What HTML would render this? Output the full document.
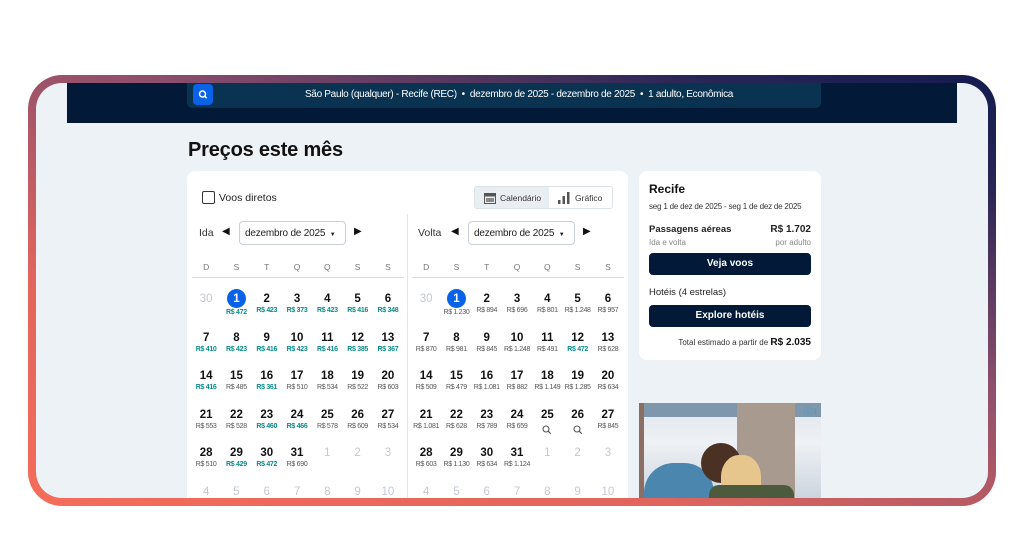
<!DOCTYPE html>
<html><head><meta charset="utf-8"><style>
*{box-sizing:border-box;margin:0;padding:0}
body{width:1024px;height:536px;background:#fff;position:relative;overflow:hidden;font-family:"Liberation Sans",sans-serif;color:#111}
.frame{position:absolute;left:28px;top:75px;width:968px;height:431px;border-radius:34px;background:linear-gradient(20deg,#f56c5a 0%,#e0655d 30%,#8e4f6c 60%,#2a2656 85%,#141b4f 100%)}
.inner{position:absolute;left:8px;top:8px;right:8px;bottom:8px;border-radius:26px;background:#edf2f7;overflow:hidden}
.hdr{position:absolute;left:31px;top:0;width:890px;height:40px;background:#021a37}
.sbar{position:absolute;left:151px;top:0;width:634px;height:25px;background:#0a3352;border-radius:0 0 5px 5px}
.sbtn{position:absolute;left:6px;top:1px;width:20px;height:21px;background:#0a62e8;border-radius:4px}
.stxt{position:absolute;left:0;right:0;top:6px;text-align:center;color:#fff;font-size:10px;letter-spacing:-.3px;padding-left:30px}
h1{position:absolute;left:152px;top:56px;font-size:20px;font-weight:bold;color:#111;letter-spacing:-.2px}
.card{position:absolute;background:#fff;border-radius:8px}
.cb{position:absolute;left:15px;top:20px;width:13px;height:13px;border:1.5px solid #333;border-radius:2px}
.t{position:absolute;white-space:nowrap}
.tog{position:absolute;left:287px;top:15px;width:139px;height:23px;border:1px solid #dde3ea;border-radius:3px;overflow:hidden;font-size:8.5px;color:#333}
.dd{position:absolute;width:107px;height:24px;border:1px solid #c9d0d8;border-radius:4px;font-size:10px;padding:6px 0 0 5px;color:#222;white-space:nowrap;letter-spacing:-.2px}
.grid{position:absolute;display:grid;grid-template-columns:repeat(7,30.3px);grid-auto-rows:38.6px}
.c{text-align:center}
.c b{display:block;font-size:11.5px;line-height:14px;padding-top:3px;color:#111}
.c i{display:block;font-style:normal;font-size:7px;color:#555;line-height:10px;letter-spacing:-.3px;white-space:nowrap}
.c i.g{color:#0b8a8a;font-weight:bold}
.c.x b{color:#c4c9cf;font-weight:normal}
.c.s b{display:inline-block;width:19px;height:19px;border-radius:50%;background:#0a62e8;color:#fff;padding-top:3px;margin-top:0}
.wk{position:absolute;display:grid;grid-template-columns:repeat(7,30.3px);font-size:8.5px;color:#777;text-align:center}
.btn{position:absolute;left:10px;width:162px;height:22px;background:#021a37;border-radius:4px;color:#fff;font-size:10px;font-weight:bold;text-align:center;padding-top:5px}
</style></head><body>
<div class="frame"><div class="inner">
<div class="hdr"></div>
<div class="sbar"><div class="sbtn"><svg width="20" height="21" viewBox="0 0 20 21"><circle cx="9.5" cy="10" r="3" fill="none" stroke="#fff" stroke-width="1.5"/><path d="M11.7 12.2l2 2" stroke="#fff" stroke-width="1.5"/></svg></div>
<div class="stxt">São Paulo (qualquer) - Recife (REC) &nbsp;•&nbsp; dezembro de 2025 - dezembro de 2025 &nbsp;•&nbsp; 1 adulto, Econômica</div></div>
<h1>Preços este mês</h1>

<div class="card" style="left:151px;top:88px;width:441px;height:340px">
<div class="cb"></div><div class="t" style="left:32px;top:21px;font-size:10.5px;color:#222">Voos diretos</div>
<div class="tog"><div style="position:absolute;left:0;top:0;width:74px;height:23px;background:#e9eef3"></div>
<svg style="position:absolute;left:9px;top:6px" width="12" height="11"><rect x="0.5" y="0.5" width="11" height="10" fill="none" stroke="#555"/><rect x="0.5" y="0.5" width="11" height="3" fill="#555"/><rect x="2" y="5" width="8" height="4" fill="#888"/></svg>
<div class="t" style="left:25px;top:6px">Calendário</div>
<svg style="position:absolute;left:83px;top:5px" width="12" height="12"><rect x="0" y="8" width="2.5" height="4" fill="#555"/><rect x="4.5" y="4" width="2.5" height="8" fill="#555"/><rect x="9" y="0" width="2.5" height="12" fill="#555"/></svg>
<div class="t" style="left:100px;top:6px">Gráfico</div></div>
<div style="position:absolute;left:220px;top:43px;width:1px;height:300px;background:#e3e7ec"></div>
<div class="t" style="left:12px;top:56px;font-size:10.5px;color:#333">Ida</div>
<div class="t" style="left:35px;top:55px;font-size:10px">◀</div>
<div class="dd" style="left:52px;top:50px">dezembro de 2025 <span style="font-size:6px;margin-left:2px">▼</span></div>
<div class="t" style="left:167px;top:55px;font-size:10px">▶</div>
<div class="t" style="left:231px;top:56px;font-size:10.5px;color:#333">Volta</div>
<div class="t" style="left:264px;top:55px;font-size:10px">◀</div>
<div class="dd" style="left:281px;top:50px">dezembro de 2025 <span style="font-size:6px;margin-left:2px">▼</span></div>
<div class="t" style="left:396px;top:55px;font-size:10px">▶</div>
<div class="wk" style="left:4px;top:91px"><span>D</span><span>S</span><span>T</span><span>Q</span><span>Q</span><span>S</span><span>S</span></div>
<div class="wk" style="left:224px;top:91px"><span>D</span><span>S</span><span>T</span><span>Q</span><span>Q</span><span>S</span><span>S</span></div>
<div style="position:absolute;left:5px;top:106px;width:212px;height:1px;background:#d8dde3"></div>
<div style="position:absolute;left:225px;top:106px;width:212px;height:1px;background:#d8dde3"></div>

<div class="grid" style="left:4px;top:118px">
<div class="c x"><b>30</b></div><div class="c s"><b>1</b><i class="g">R$ 472</i></div><div class="c"><b>2</b><i class="g">R$ 423</i></div><div class="c"><b>3</b><i class="g">R$ 373</i></div><div class="c"><b>4</b><i class="g">R$ 423</i></div><div class="c"><b>5</b><i class="g">R$ 416</i></div><div class="c"><b>6</b><i class="g">R$ 348</i></div>
<div class="c"><b>7</b><i class="g">R$ 410</i></div><div class="c"><b>8</b><i class="g">R$ 423</i></div><div class="c"><b>9</b><i class="g">R$ 416</i></div><div class="c"><b>10</b><i class="g">R$ 423</i></div><div class="c"><b>11</b><i class="g">R$ 416</i></div><div class="c"><b>12</b><i class="g">R$ 385</i></div><div class="c"><b>13</b><i class="g">R$ 367</i></div>
<div class="c"><b>14</b><i class="g">R$ 416</i></div><div class="c"><b>15</b><i>R$ 485</i></div><div class="c"><b>16</b><i class="g">R$ 361</i></div><div class="c"><b>17</b><i>R$ 510</i></div><div class="c"><b>18</b><i>R$ 534</i></div><div class="c"><b>19</b><i>R$ 522</i></div><div class="c"><b>20</b><i>R$ 603</i></div>
<div class="c"><b>21</b><i>R$ 553</i></div><div class="c"><b>22</b><i>R$ 528</i></div><div class="c"><b>23</b><i class="g">R$ 460</i></div><div class="c"><b>24</b><i class="g">R$ 466</i></div><div class="c"><b>25</b><i>R$ 578</i></div><div class="c"><b>26</b><i>R$ 609</i></div><div class="c"><b>27</b><i>R$ 534</i></div>
<div class="c"><b>28</b><i>R$ 510</i></div><div class="c"><b>29</b><i class="g">R$ 429</i></div><div class="c"><b>30</b><i class="g">R$ 472</i></div><div class="c"><b>31</b><i>R$ 690</i></div><div class="c x"><b>1</b></div><div class="c x"><b>2</b></div><div class="c x"><b>3</b></div>
<div class="c x"><b>4</b></div><div class="c x"><b>5</b></div><div class="c x"><b>6</b></div><div class="c x"><b>7</b></div><div class="c x"><b>8</b></div><div class="c x"><b>9</b></div><div class="c x"><b>10</b></div>
</div>

<div class="grid" style="left:224px;top:118px">
<div class="c x"><b>30</b></div><div class="c s"><b>1</b><i>R$ 1.230</i></div><div class="c"><b>2</b><i>R$ 894</i></div><div class="c"><b>3</b><i>R$ 696</i></div><div class="c"><b>4</b><i>R$ 801</i></div><div class="c"><b>5</b><i>R$ 1.248</i></div><div class="c"><b>6</b><i>R$ 957</i></div>
<div class="c"><b>7</b><i>R$ 870</i></div><div class="c"><b>8</b><i>R$ 981</i></div><div class="c"><b>9</b><i>R$ 845</i></div><div class="c"><b>10</b><i>R$ 1.248</i></div><div class="c"><b>11</b><i>R$ 491</i></div><div class="c"><b>12</b><i class="g">R$ 472</i></div><div class="c"><b>13</b><i>R$ 628</i></div>
<div class="c"><b>14</b><i>R$ 509</i></div><div class="c"><b>15</b><i>R$ 479</i></div><div class="c"><b>16</b><i>R$ 1.081</i></div><div class="c"><b>17</b><i>R$ 882</i></div><div class="c"><b>18</b><i>R$ 1.149</i></div><div class="c"><b>19</b><i>R$ 1.285</i></div><div class="c"><b>20</b><i>R$ 634</i></div>
<div class="c"><b>21</b><i>R$ 1.081</i></div><div class="c"><b>22</b><i>R$ 628</i></div><div class="c"><b>23</b><i>R$ 789</i></div><div class="c"><b>24</b><i>R$ 659</i></div><div class="c"><b>25</b><svg width="10" height="10"><circle cx="4" cy="4" r="3" fill="none" stroke="#555" stroke-width="1.1"/><path d="M6.2 6.2l2.5 2.5" stroke="#555" stroke-width="1.1"/></svg></div><div class="c"><b>26</b><svg width="10" height="10"><circle cx="4" cy="4" r="3" fill="none" stroke="#555" stroke-width="1.1"/><path d="M6.2 6.2l2.5 2.5" stroke="#555" stroke-width="1.1"/></svg></div><div class="c"><b>27</b><i>R$ 845</i></div>
<div class="c"><b>28</b><i>R$ 603</i></div><div class="c"><b>29</b><i>R$ 1.130</i></div><div class="c"><b>30</b><i>R$ 634</i></div><div class="c"><b>31</b><i>R$ 1.124</i></div><div class="c x"><b>1</b></div><div class="c x"><b>2</b></div><div class="c x"><b>3</b></div>
<div class="c x"><b>4</b></div><div class="c x"><b>5</b></div><div class="c x"><b>6</b></div><div class="c x"><b>7</b></div><div class="c x"><b>8</b></div><div class="c x"><b>9</b></div><div class="c x"><b>10</b></div>
</div>
</div>

<div class="card" style="left:603px;top:88px;width:182px;height:189px">
<div class="t" style="left:10px;top:11px;font-size:12px;font-weight:bold">Recife</div>
<div class="t" style="left:10px;top:31px;font-size:8px;color:#333;letter-spacing:-.2px">seg 1 de dez de 2025 - seg 1 de dez de 2025</div>
<div class="t" style="left:10px;top:53px;font-size:9.5px;font-weight:bold;color:#222">Passagens aéreas</div>
<div class="t" style="right:10px;top:53px;font-size:10px;font-weight:bold;color:#222">R$ 1.702</div>
<div class="t" style="left:10px;top:67px;font-size:8px;color:#888">Ida e volta</div>
<div class="t" style="right:10px;top:67px;font-size:8px;color:#888">por adulto</div>
<div class="btn" style="top:82px">Veja voos</div>
<div class="t" style="left:10px;top:116px;font-size:9.5px;color:#222">Hotéis (4 estrelas)</div>
<div class="btn" style="top:134px">Explore hotéis</div>
<div class="t" style="right:10px;top:166px;font-size:8px;color:#333">Total estimado a partir de <b style="font-size:10px;color:#111">R$ 2.035</b></div>
</div>

<div style="position:absolute;left:603px;top:320px;width:182px;height:100px;overflow:hidden;background:linear-gradient(180deg,#dfe6ee 0%,#eef1f5 40%,#c9d2dc 100%)">
<div style="position:absolute;left:0;top:0;width:182px;height:14px;background:#7f97ad"></div>
<div style="position:absolute;left:98px;top:0;width:58px;height:100px;background:#a89a8e"></div>
<div style="position:absolute;left:0;top:0;width:5px;height:100px;background:#8a6f62"></div>
<div style="position:absolute;left:5px;top:60px;width:70px;height:40px;background:#4a86ad;border-radius:30px 30px 0 0"></div>
<div style="position:absolute;left:62px;top:40px;width:40px;height:40px;border-radius:50%;background:#4b3024"></div>
<div style="position:absolute;left:82px;top:52px;width:40px;height:48px;border-radius:45% 45% 0 0;background:#e6c68d"></div>
<div style="position:absolute;left:70px;top:82px;width:85px;height:20px;background:#4c5a3e;border-radius:10px 10px 0 0"></div>
<div style="position:absolute;left:165px;top:3px;font-size:8px;color:#1aa3d6">ⓘ i</div>
</div>
</div></div>
</body></html>
